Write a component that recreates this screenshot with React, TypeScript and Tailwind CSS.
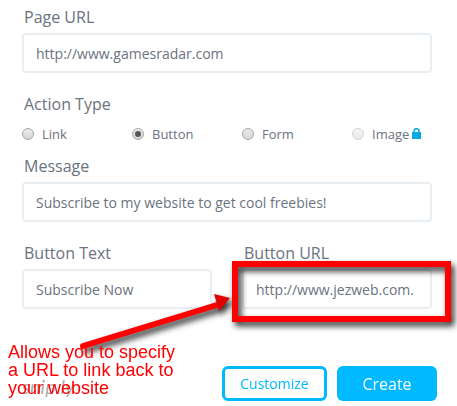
import React, { useState } from 'react';

const actionTypes = [
  { id: 'link', label: 'Link', locked: false },
  { id: 'button', label: 'Button', locked: false },
  { id: 'form', label: 'Form', locked: false },
  { id: 'image', label: 'Image', locked: true },
];

interface FieldProps {
  id: string;
  label: string;
  defaultValue: string;
  children?: React.ReactNode;
}

const Field: React.FC<FieldProps> = ({ id, label, defaultValue, children }) => (
  <div className="min-w-0 flex-1">
    <label htmlFor={id} className="block px-0.5 text-base leading-6">{label}</label>
    <div className="relative mt-1">
      <input
        id={id}
        type="text"
        defaultValue={defaultValue}
        className="block h-10 w-full rounded border-2 border-[#e9eef2] bg-white px-3 text-sm outline-none"
      />
      {children}
    </div>
  </div>
);

const LockIcon = () => (
  <svg width="9" height="11" viewBox="0 0 9 11" className="mb-0.5 ml-[3px]" aria-hidden="true">
    <path d="M2 5V3a2.5 2.3 0 0 1 5 0v2" fill="none" stroke="#00a9e6" strokeWidth="1.5" />
    <rect y="4" width="9" height="7" rx="0.5" fill="#00a9e6" />
  </svg>
);

// Red frame around the field and the arrow that points at it
const Highlight = () => (
  <div className="pointer-events-none absolute -top-2 -right-[19px] -bottom-[13px] -left-[10px] border-[6px] border-[#ff0000] drop-shadow-[3px_4px_3px_rgba(0,0,0,0.85)]">
    <svg width="160" height="70" viewBox="0 0 160 70" className="absolute top-[26px] right-full mr-[6px] overflow-visible" aria-hidden="true">
      <path d="M11 53L145 12" stroke="#ff0000" strokeWidth="6" strokeLinecap="round" />
      <path d="M142 1L158 5L147 18L145 11Z" fill="#e00000" />
    </svg>
  </div>
);

const App: React.FC = () => {
  const [action, setAction] = useState('button');

  return (
    <form className="bg-white pt-[5px] pr-5 pl-[22px] font-['Open_Sans',sans-serif] text-[#6b7280]" onSubmit={e => e.preventDefault()}>
      <div className="pr-[5px]">
        <Field id="page-url" label="Page URL" defaultValue="http://www.gamesradar.com" />

        <fieldset className="mt-[19px]">
          <legend className="px-0.5 text-base leading-6">Action Type</legend>
          <div className="mt-2 flex">
            {actionTypes.map(type => (
              <label key={type.id} className="flex h-5 w-[110px] items-center text-[13px] leading-5">
                <input
                  type="radio"
                  name="action"
                  checked={action === type.id}
                  disabled={type.locked}
                  onChange={() => setAction(type.id)}
                  className="mr-2 flex size-3 shrink-0 appearance-none items-center justify-center rounded-full border border-[#a6a6a6] bg-linear-to-b from-[#ececec] to-[#d6d6d6] before:size-1.5 before:rounded-full checked:before:bg-[#555555] before:content-[''] disabled:opacity-50"
                />
                {type.label}
                {type.locked && <LockIcon />}
              </label>
            ))}
          </div>
        </fieldset>

        <div className="mt-[10px]">
          <Field id="message" label="Message" defaultValue="Subscribe to my website to get cool freebies!" />
        </div>

        <div className="mt-[19px] flex gap-[30px]">
          <Field id="button-text" label="Button Text" defaultValue="Subscribe Now" />
          <Field id="button-url" label="Button URL" defaultValue="http://www.jezweb.com.">
            <Highlight />
          </Field>
        </div>
      </div>

      {/* Footer */}
      <div className="relative mt-[57px] flex items-start justify-between">
        <a href="#" className="mt-2 font-['Lato',cursive] text-xl leading-6 text-[#b0b0b0] italic">snip.ly</a>
        <div className="flex gap-[10px]">
          <button type="button" className="h-[35px] w-[105px] rounded-md border-[3px] border-[#00b9ff] text-sm font-medium text-[#00b9ff]">Customize</button>
          <button type="submit" className="h-[35px] w-[100px] rounded-md bg-[#00b9ff] text-base font-medium text-white">Create</button>
        </div>
        <p className="absolute -top-[23px] -left-[14px] font-['Liberation_Sans',sans-serif] text-lg leading-[18px] whitespace-nowrap text-[#ff0000]">
          Allows you to specify<br />a URL to link back to<br />your website
        </p>
      </div>
    </form>
  );
};

export default App;
